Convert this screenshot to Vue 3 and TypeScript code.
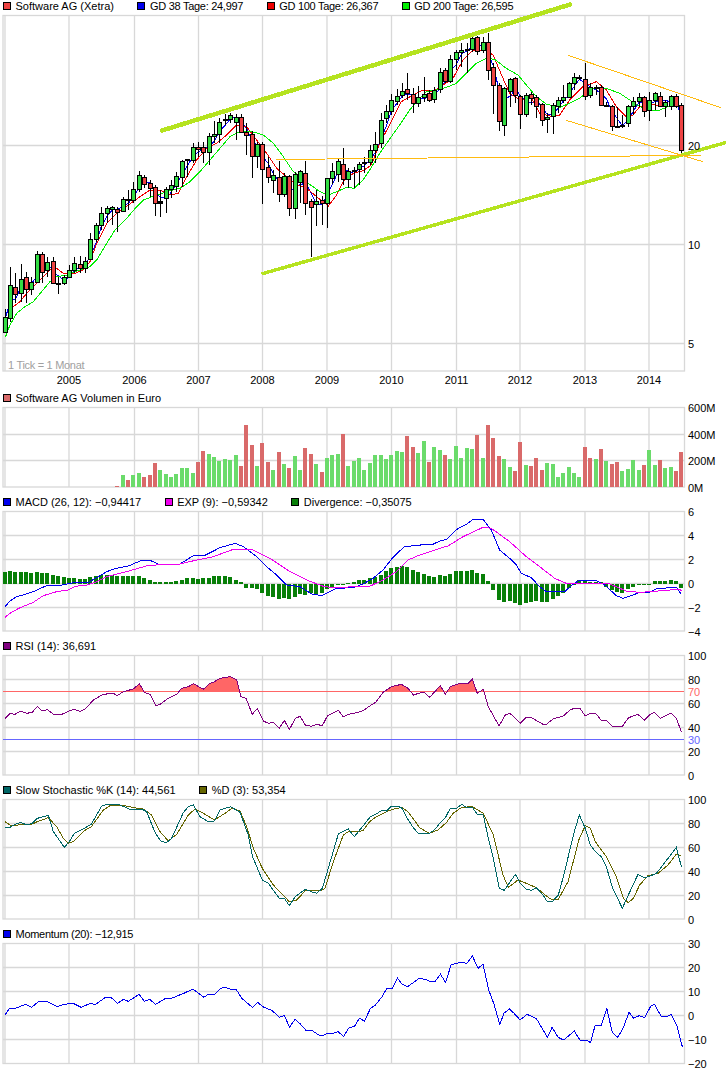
<script setup lang="ts">
interface LegendItem { color: string; text: string; tight?: boolean }
interface Line { points: string; color: string }
interface Bar { x: number; y: number; h: number; color: string }
interface AxisLabel { y: number; text: string; color?: string }
interface Panel {
  id: string
  top: number
  height: number
  legend: LegendItem[]
  gridY: number[]
  labels: AxisLabel[]
  bars: Bar[]
  lines: Line[]
}

// Traced values are in the coordinates of two 3x crops: the left half starts at x=0, the right at x=363.
const SPLIT = 1089
const px = (v: number) => Math.round(v * 100 / 3) / 100

function trace(left: number[], right: number[], top: number): string {
  const out: string[] = []
  const add = (arr: number[], dx: number) => {
    for (let i = 0; i < arr.length; i += 2) {
      out.push(`${px(arr[i] + dx)},${px(arr[i + 1]) + top}`)
    }
  }
  add(left, 0)
  add(right, SPLIT)
  return out.join(' ')
}

const slotX = (i: number) => Math.floor(5 + i * 5.373) + 0.5

// top, bottom, high, low, kind (g up, r down, d doji)
type Candle = [number, number, number, number, string]
const candleRows: Candle[] = [
  [952,995,928,995,'g'],[856,955,800,965,'g'],[860,883,820,908,'r'],[838,880,792,905,'g'],[832,868,815,908,'r'],
  [847,868,830,885,'g'],[763,847,752,850,'g'],[763,815,755,850,'r'],[787,811,770,830,'g'],[784,848,770,850,'r'],
  [848,851,830,882,'d'],[832,850,825,855,'g'],[811,832,795,835,'g'],[790,811,770,820,'g'],[793,805,768,818,'r'],
  [784,805,770,818,'g'],[718,778,700,780,'g'],[676,718,670,725,'g'],[640,676,620,690,'g'],[625,640,618,668,'g'],
  [622,628,618,675,'g'],[628,636,620,695,'r'],[598,632,590,635,'g'],[596,599,570,630,'d'],[568,601,545,610,'g'],
  [526,568,512,575,'g'],[532,551,525,565,'r'],[550,563,540,590,'r'],[562,610,555,648,'r'],[604,608,570,650,'d'],
  [568,595,560,640,'g'],[556,568,540,595,'g'],[529,559,515,575,'g'],[484,532,480,560,'g'],[478,481,478,530,'d'],
  [440,481,430,490,'g'],[440,448,425,470,'r'],[442,457,425,490,'r'],[409,457,398,495,'g'],[401,409,362,428,'g'],
  [367,401,355,430,'g'],[356,358,342,375,'d'],[346,356,340,368,'g'],[352,367,342,420,'g'],[352,397,342,400,'r'],
  [397,406,370,465,'r'],[402,469,392,533,'r'],[433,469,425,505,'g'],[433,508,425,613,'r'],[502,532,470,550,'r'],
  [526,541,510,580,'g'],[532,583,482,605,'r'],[529,583,520,590,'g'],[529,625,525,648,'r'],[523,625,515,658,'g'],
  [514,547,510,610,'g'],[520,610,482,645,'r'],[604,622,598,770,'r'],[604,613,570,678,'g'],[601,610,588,675,'r'],
  [535,610,535,685,'g'],[514,535,490,553,'g'],[484,523,478,545,'g'],[493,538,443,555,'r'],[514,538,505,565,'g'],
  [511,514,500,565,'d'],[493,508,487,555,'g'],[487,490,470,520,'d'],[450,487,435,495,'g'],[433,450,395,490,'g'],
  [361,430,340,445,'g'],[334,355,315,370,'g'],[301,334,283,345,'g'],[289,304,268,315,'g'],[274,286,250,295,'g'],
  [268,280,220,300,'r'],[283,310,265,338,'r'],[292,310,258,320,'g'],[283,292,232,305,'g'],[280,301,270,305,'r'],
  [271,298,260,310,'g'],[217,268,205,278,'g'],[211,244,205,250,'r'],[178,244,165,250,'g'],[157,178,150,210,'g'],
  [151,157,130,200,'g'],[148,150,130,218,'d'],[115,148,110,155,'g'],[112,154,108,165,'r'],[127,151,112,158,'g'],
  [127,211,100,240,'r'],[202,256,190,343,'r'],[256,364,250,393,'r'],[265,376,260,408,'g'],[238,274,235,320,'g'],
  [235,286,230,310,'r'],[289,343,285,388,'r'],[286,343,280,350,'g'],[283,295,275,315,'r'],[292,319,285,353,'r'],
  [313,361,310,378,'r'],[352,358,340,398,'g'],[316,349,310,401,'g'],[301,319,290,340,'g'],[292,301,255,310,'g'],
  [250,292,245,295,'g'],[232,250,218,270,'g'],[232,234,225,240,'d'],[238,289,190,300,'r'],[262,286,250,293,'g'],
  [262,264,255,285,'d'],[262,316,255,318,'r'],[315,317,305,320,'d'],[319,379,315,393,'r'],[377,379,320,385,'d'],
  [376,378,345,385,'d'],[319,370,315,380,'g'],[304,319,290,345,'g'],[292,304,278,320,'g'],[292,334,288,350,'r'],
  [301,331,275,362,'g'],[280,301,275,330,'g'],[289,319,275,322,'r'],[307,319,300,350,'g'],[289,319,285,330,'g'],
  [289,319,283,325,'r'],[316,451,310,458,'r'],
]

const candles = candleRows.map(([t, b, h, l, kind], i) => ({
  x: slotX(i),
  top: px(t) + 0.5,
  height: Math.max(px(b - t), 1),
  high: px(h),
  low: px(l),
  kind,
}))

const closes = candleRows.map(([t, b, , , kind]) => (kind === 'r' ? b : t))
const gd38 = closes
  .map((_, i) => {
    const from = Math.max(0, i - 2)
    const part = closes.slice(from, i + 1)
    const avg = part.reduce((a, c) => a + c, 0) / part.length
    return `${slotX(i)},${px(avg)}`
  })
  .join(' ')

const gd100 = trace(
  [40,920,60,905,80,880,100,860,130,830,150,810,170,805,190,820,225,820,250,810,270,785,290,730,320,670,350,640,385,615,420,590,450,570,480,570,510,585,535,580,560,530,590,480,620,445,650,430,680,405,710,375,740,380,770,420,800,460,830,505,860,530,890,555,920,565,950,590,985,618,1010,585,1030,545,1060,520],
  [0,512,25,495,50,430,85,365,115,305,150,285,180,270,210,275,240,255,270,235,300,180,330,150,370,150,390,165,420,235,440,280,470,300,505,295,530,340,570,350,590,345,620,300,660,260,700,245,730,270,760,320,790,350,810,345,830,320,860,310,900,320,950,320],
  0,
)
const gd200 = trace(
  [16,1012,30,975,50,940,75,920,100,905,125,875,150,845,170,830,200,825,240,810,270,800,290,780,320,730,345,690,380,655,410,620,430,600,470,585,500,575,540,565,570,545,600,515,630,480,660,445,690,410,720,395,750,393,790,405,820,430,850,470,880,515,900,530,925,550,960,575,985,585,1010,575,1040,562,1062,565],
  [0,540,20,510,50,460,85,410,110,375,140,330,170,295,190,275,220,270,250,262,280,250,310,220,340,190,370,175,395,178,430,205,465,225,490,255,520,290,550,312,590,322,620,310,650,295,680,270,700,262,730,265,770,280,800,300,830,320,860,330,890,330,920,318,955,315],
  0,
)

// thick channel lines and the thin drawn trend lines
const thickTrends = [
  { x1: 162, y1: 130.5, x2: 570, y2: 4.5, width: 4.5 },
  { x1: 263, y1: 273.5, x2: 726, y2: 142.5, width: 3.5 },
]
const thinTrends = [
  { x1: 276, y1: 159.5, x2: 701, y2: 155.3 },
  { x1: 568, y1: 55.3, x2: 721, y2: 107.7 },
  { x1: 566, y1: 120.3, x2: 703, y2: 161.7 },
]

const gridX = [5, 69, 134.5, 198.5, 262.5, 327, 391.5, 456.5, 520, 585, 649]
const years = ['2005', '2006', '2007', '2008', '2009', '2010', '2011', '2012', '2013', '2014']

const volTops = [
  303,270,285,270,264,276,270,234,255,267,276,267,249,249,264,231,198,207,216,228,222,225,210,243,120,180,243,174,231,255,
  201,237,249,213,255,189,207,237,261,219,210,207,147,243,228,219,255,234,210,210,222,210,198,201,153,186,204,168,231,186,
  195,210,222,183,219,189,192,150,219,120,159,213,222,246,258,171,240,243,219,255,234,237,276,264,246,264,276,186,219,222,
  192,228,237,231,258,252,225,255,240,195,240,225,249,246,258,201,
]
const volRed = new Set([
  21,23,26,27,28,36,37,44,45,46,48,49,51,53,56,57,59,63,
  75,76,79,82,88,90,91,92,95,96,98,99,100,108,109,111,113,114,119,122,125,126,
])
const volumeBars: Bar[] = volTops.map((t, i) => ({
  x: slotX(i + 21) - 2.5,
  y: 385 + px(t),
  h: px(306 - t),
  color: volRed.has(i + 21) ? '#d96a6a' : '#6bdb6b',
}))

const macdTops = [
  561,558,561,561,561,564,561,564,564,570,573,576,579,579,582,582,576,573,570,570,570,573,573,573,573,573,579,585,591,591,
  591,591,588,585,579,579,582,579,579,573,573,573,576,585,591,610,610,612,624,633,636,642,639,642,636,627,630,624,627,624,
  612,609,598,598,594,591,585,585,579,576,570,558,549,546,543,546,555,561,567,573,576,570,573,567,558,558,558,555,564,567,
  588,615,645,651,648,654,660,654,651,648,651,651,642,633,624,609,598,585,588,591,591,591,606,615,621,624,612,606,600,600,
  598,589,588,588,585,588,609,
]
const macdBars: Bar[] = macdTops.map((t, i) => ({
  x: slotX(i) - 2.5,
  y: 385 + px(Math.min(t, 596)),
  h: Math.max(px(Math.abs(596 - t)), 1),
  color: '#087f08',
}))

const macdLine = trace(
  [15,665,30,648,50,635,75,628,100,620,125,608,145,601,180,601,205,596,230,592,265,592,290,578,320,560,345,551,385,543,425,526,450,526,475,537,540,537,580,512,615,511,660,488,705,475,730,485,770,515,800,545,830,570,860,600,900,605,935,627,965,632,1010,610,1060,608],
  [0,597,30,580,60,555,90,517,125,484,165,482,180,478,205,480,235,466,250,464,285,430,310,418,330,403,360,403,385,435,410,495,440,520,460,540,475,565,505,578,530,605,550,620,605,620,630,598,650,585,695,585,725,600,760,632,780,640,810,630,830,622,860,622,880,612,920,608,940,607,955,628],
  385,
)
const expLine = trace(
  [15,697,30,685,60,668,100,652,130,632,170,620,205,615,225,604,260,600,290,590,320,575,380,560,445,541,540,537,590,525,640,515,700,493,755,493,810,520,870,560,920,585,970,604,1000,608],
  [0,604,20,604,60,585,100,560,135,525,170,510,230,490,255,483,300,455,360,427,385,430,440,470,490,515,530,545,575,580,610,595,700,595,740,597,790,618,830,622,860,620,900,617,950,612,955,618],
  385,
)

const rsiLine = trace(
  [15,250,30,235,45,238,62,228,80,235,97,232,112,214,127,228,143,224,160,238,185,238,220,223,240,229,258,220,280,195,310,178,340,175,352,182,370,170,400,162,418,146,433,172,450,178,468,212,480,208,500,193,530,178,545,160,565,155,580,146,610,163,628,146,640,142,660,130,690,125,710,135,723,185,738,190,757,238,772,220,790,258,805,265,820,262,838,280,853,256,868,284,886,250,900,244,916,270,934,274,950,268,967,272,982,243,1015,226,1030,246,1045,238,1075,232],
  [0,227,20,213,38,202,60,172,85,155,115,148,135,160,152,181,165,175,184,172,200,187,232,152,247,178,262,155,290,145,315,145,328,132,343,175,361,163,376,215,390,240,408,273,427,240,441,235,472,265,490,246,505,248,540,268,550,268,570,252,601,243,620,226,635,219,650,219,667,243,685,234,697,234,715,256,730,256,750,276,778,274,797,248,825,238,844,256,859,240,874,232,892,250,924,234,940,250,955,290],
  635,
)
const RSI_70 = 691.5
const RSI_30 = 739.5
const rsiArea = `5,${RSI_70} ${rsiLine} 682,${RSI_70}`

const stochK = trace(
  [15,577,30,577,45,568,62,562,80,570,97,565,112,550,145,541,160,590,193,637,208,620,223,595,256,578,274,568,305,513,322,508,360,510,388,522,425,522,440,530,465,592,482,618,498,623,514,612,550,533,565,515,580,510,600,545,625,560,643,558,660,525,692,515,720,532,745,600,757,663,787,735,805,745,838,790,853,790,868,812,886,785,916,763,934,770,950,775,967,760,982,710,1015,597,1045,582,1063,605],
  [0,573,22,545,40,537,58,525,70,528,85,513,103,513,118,520,133,550,150,577,166,595,199,595,214,585,232,563,247,548,262,520,280,520,296,508,310,517,328,517,343,538,361,540,376,610,391,670,409,760,424,766,457,718,472,745,490,763,505,766,520,758,540,780,553,800,568,800,586,780,601,725,634,590,649,540,667,580,682,630,697,650,715,665,730,695,748,757,778,820,796,780,825,718,844,728,859,724,880,715,900,690,940,637,955,695],
  635,
)
const stochD = trace(
  [15,560,30,570,45,573,62,568,97,567,112,560,145,548,170,575,190,610,205,625,220,620,256,585,274,575,310,525,330,512,375,512,400,518,430,522,455,540,480,590,505,618,530,598,565,540,585,522,610,535,643,555,675,535,695,520,720,528,740,575,760,640,787,700,820,750,868,800,890,795,916,767,960,768,975,760,1000,680,1030,600,1045,590,1075,590],
  [0,587,20,560,40,545,70,530,100,520,118,518,135,530,170,578,199,595,225,585,250,563,270,535,296,517,328,515,361,535,391,600,420,720,436,757,465,735,490,745,520,758,553,785,568,795,586,793,615,740,649,610,667,572,682,580,697,620,730,665,760,725,781,790,796,803,811,790,830,750,855,722,885,715,915,690,940,657,955,662],
  635,
)

// this crop came out 2.159x wide and 3x high
const momentumRaw = [
  11,285,20,266,35,264,55,253,68,262,82,246,100,244,124,260,138,253,158,250,175,262,195,250,205,254,228,232,240,233,254,250,267,238,277,244,300,223,312,244,323,238,336,253,358,235,372,234,400,218,416,207,440,232,450,223,463,223,476,205,487,202,498,208,510,208,522,235,545,262,556,247,570,262,588,272,603,292,614,286,625,322,637,298,647,310,660,330,672,330,688,345,698,346,708,340,720,340,730,335,742,350,752,325,766,318,776,295,787,303,800,265,810,256,825,230,835,205,847,205,858,174,868,192,880,200,905,175,918,178,930,185,938,186,951,163,962,187,974,135,985,130,996,127,1008,130,1020,108,1032,145,1043,133,1055,210,1066,250,1079,313,1088,280,1100,267,1110,280,1123,300,1138,283,1158,296,1182,352,1192,322,1205,352,1217,360,1240,333,1252,360,1265,360,1275,368,1285,315,1298,317,1310,265,1322,338,1334,352,1345,325,1358,277,1368,295,1380,287,1392,293,1405,258,1413,253,1427,288,1440,289,1449,283,1462,320,1473,380,
]
const momentumLine = momentumRaw
  .reduce<string[]>((acc, v, i) => {
    if (i % 2 === 1) acc.push(`${(momentumRaw[i - 1] / 2.159).toFixed(1)},${px(v) + 920}`)
    return acc
  }, [])
  .join(' ')

const axisSteps = (top: number, step: number, values: string[]): AxisLabel[] =>
  values.map((text, i) => ({ y: top + i * step, text }))

const panels: Panel[] = [
  {
    id: 'price',
    top: 15,
    height: 376,
    legend: [
      { color: '#ee4444', text: 'Software AG (Xetra)' },
      { color: '#0000ee', text: 'GD 38 Tage: 24,997', tight: true },
      { color: '#ee0000', text: 'GD 100 Tage: 26,367', tight: true },
      { color: '#00ee00', text: 'GD 200 Tage: 26,595', tight: true },
    ],
    gridY: [145.5, 244.5, 343.5],
    labels: [
      { y: 145.5, text: '20' },
      { y: 244.5, text: '10' },
      { y: 343.5, text: '5' },
    ],
    bars: [],
    lines: [
      { points: gd38, color: '#0000ee' },
      { points: gd100, color: '#ee0000' },
      { points: gd200, color: '#00ee00' },
    ],
  },
  {
    id: 'volume',
    top: 407,
    height: 88,
    legend: [{ color: '#d96a6a', text: 'Software AG Volumen in Euro' }],
    gridY: [434.5, 460.5],
    labels: [
      { y: 408, text: '600M' },
      { y: 435, text: '400M' },
      { y: 461, text: '200M' },
      { y: 488, text: '0M' },
    ],
    bars: volumeBars,
    lines: [],
  },
  {
    id: 'macd',
    top: 511,
    height: 128,
    legend: [
      { color: '#0000ee', text: 'MACD (26, 12): −0,94417' },
      { color: '#ee00ee', text: 'EXP (9): −0,59342' },
      { color: '#087f08', text: 'Divergence: −0,35075' },
    ],
    gridY: [535.5, 559.5, 583.5, 607.5],
    labels: axisSteps(512, 24, ['6', '4', '2', '0', '−2', '−4']),
    bars: macdBars,
    lines: [
      { points: macdLine, color: '#0000ee' },
      { points: expLine, color: '#ee00ee' },
    ],
  },
  {
    id: 'rsi',
    top: 655,
    height: 128,
    legend: [{ color: '#800080', text: 'RSI (14): 36,691' }],
    gridY: [679.5, 703.5, 727.5, 751.5],
    labels: [
      ...axisSteps(656, 24, ['100', '80', '60', '40', '20', '0']),
      { y: 692, text: '70', color: '#ff6666' },
      { y: 740, text: '30', color: '#6666ff' },
    ],
    bars: [],
    lines: [
      { points: `3,${RSI_70} 684,${RSI_70}`, color: '#ff6666' },
      { points: `3,${RSI_30} 684,${RSI_30}`, color: '#6666ff' },
      { points: rsiLine, color: '#800080' },
    ],
  },
  {
    id: 'stoch',
    top: 799,
    height: 128,
    legend: [
      { color: '#006666', text: 'Slow Stochastic %K (14): 44,561' },
      { color: '#666600', text: '%D (3): 53,354' },
    ],
    gridY: [823.5, 847.5, 871.5, 895.5],
    labels: axisSteps(800, 24, ['100', '80', '60', '40', '20', '0']),
    bars: [],
    lines: [
      { points: stochD, color: '#666600' },
      { points: stochK, color: '#006666' },
    ],
  },
  {
    id: 'momentum',
    top: 943,
    height: 129,
    legend: [{ color: '#0000ee', text: 'Momentum (20): −12,915', tight: true }],
    gridY: [967.5, 991.5, 1015.5, 1039.5],
    labels: axisSteps(944, 24, ['30', '20', '10', '0', '−10', '−20']),
    bars: [],
    lines: [{ points: momentumLine, color: '#0000ee' }],
  },
]

const plotBottom = (p: Panel) => {
  const bottoms: Record<string, number> = { price: 371, volume: 487, macd: 631, rsi: 775, stoch: 919, momentum: 1063.5 }
  return bottoms[p.id]
}
</script>

<template>
  <div class="page">
    <section v-for="p in panels" :key="p.id" class="panel">
      <div class="legend" :class="{ first: p.id === 'price' }">
        <div v-for="item in p.legend" :key="item.text" class="legend-item" :class="{ tight: item.tight }">
          <span class="swatch" :style="{ background: item.color }"></span>
          <span>{{ item.text }}</span>
        </div>
      </div>

      <svg
        class="chart"
        width="726"
        :height="p.height"
        :viewBox="`0 ${p.top} 726 ${p.height}`"
      >
        <defs v-if="p.id === 'rsi'">
          <clipPath id="rsi-over">
            <rect x="3" :y="p.top" width="681" :height="RSI_70 - p.top" />
          </clipPath>
        </defs>

        <!-- grid -->
        <rect class="grid" x="3" :y="p.top + 0.5" width="681.5" :height="plotBottom(p) - p.top - 0.5" />
        <line
          v-for="x in gridX"
          :key="x"
          class="grid"
          :x1="x"
          :x2="x"
          :y1="p.top"
          :y2="plotBottom(p)"
        />
        <line v-for="y in p.gridY" :key="y" class="grid" x1="3" x2="684.5" :y1="y" :y2="y" />

        <polygon v-if="p.id === 'rsi'" :points="rsiArea" fill="#ff6666" clip-path="url(#rsi-over)" />

        <rect
          v-for="(b, i) in p.bars"
          :key="i"
          class="crisp"
          :x="b.x"
          :y="b.y"
          width="4"
          :height="b.h"
          :fill="b.color"
        />

        <polyline
          v-for="l in p.lines"
          :key="l.color + l.points.length"
          class="series"
          :points="l.points"
          :stroke="l.color"
        />

        <template v-if="p.id === 'price'">
          <g v-for="(c, i) in candles" :key="i" class="crisp">
            <line :x1="c.x" :x2="c.x" :y1="c.high" :y2="c.low" stroke="#000" />
            <rect
              :x="c.x - 2"
              :y="c.top"
              width="4"
              :height="c.height"
              stroke="#000"
              :fill="c.kind === 'g' ? '#33dd44' : c.kind === 'r' ? '#ee4444' : '#000'"
            />
          </g>
          <line
            v-for="t in thickTrends"
            :key="t.x1"
            class="trend-thick"
            :x1="t.x1"
            :y1="t.y1"
            :x2="t.x2"
            :y2="t.y2"
            :stroke-width="t.width"
          />
          <line
            v-for="t in thinTrends"
            :key="t.x1"
            class="trend-thin"
            :x1="t.x1"
            :y1="t.y1"
            :x2="t.x2"
            :y2="t.y2"
          />
          <text class="tick-note" x="8" y="369">1 Tick = 1 Monat</text>
          <text v-for="(year, i) in years" :key="year" class="year" :x="gridX[i + 1]" y="384">{{ year }}</text>
        </template>

        <text
          v-for="l in p.labels"
          :key="l.text"
          class="axis"
          x="688"
          :y="l.y + 4"
          :fill="l.color || '#000'"
        >{{ l.text }}</text>
      </svg>
    </section>
  </div>
</template>

<style scoped>
.page {
  width: 726px;
  background: #fff;
  font-family: "Liberation Sans", Arial, sans-serif;
  font-size: 11px;
  color: #000;
}
.legend {
  display: flex;
  align-items: center;
  gap: 23.5px;
  box-sizing: border-box;
  height: 16px;
  padding: 0 0 2px 3px;
  white-space: nowrap;
}
.legend.first {
  height: 15px;
  padding-bottom: 3px;
}
.legend-item {
  display: flex;
  align-items: center;
  gap: 4.5px;
}
.legend-item.tight {
  letter-spacing: -0.28px;
}
.swatch {
  box-sizing: border-box;
  width: 8px;
  height: 8px;
  border: 1px solid #000;
}
.chart {
  display: block;
  overflow: visible;
}
.chart text {
  font-family: "Liberation Sans", Arial, sans-serif;
  font-size: 11px;
}
.grid {
  fill: none;
  stroke: #d8d8d8;
  stroke-width: 1.3;
}
.crisp {
  shape-rendering: crispEdges;
}
.series {
  fill: none;
  stroke-width: 1;
  shape-rendering: crispEdges;
}
.trend-thick {
  stroke: #b5e31f;
  stroke-linecap: round;
  shape-rendering: crispEdges;
}
.trend-thin {
  stroke: #ffbb11;
  stroke-width: 1;
  shape-rendering: crispEdges;
}
.chart .tick-note {
  fill: #a0a0a0;
  letter-spacing: -0.3px;
}
.year {
  text-anchor: middle;
}
</style>

<style>
html,
body {
  background: #fff;
}
</style>
